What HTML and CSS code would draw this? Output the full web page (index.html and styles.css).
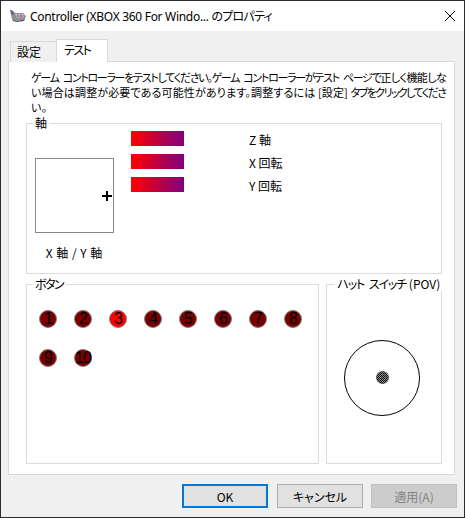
FILE: index.html
```html
<!DOCTYPE html>
<html lang="ja">
<head>
    <meta charset="UTF-8">
    <meta name="viewport" content="width=device-width, initial-scale=1.0">
    <title>Controller のプロパティ</title>
    <link rel="stylesheet" href="styles.css">
</head>
<body>
    <div class="window">
        <div class="titlebar">
            <svg class="app-icon" width="18" height="14" viewBox="0 0 18 14">
                <path d="M1 1 L4 2 L6 4 L14 4 L17 7 L16 10 L8 12 L3 10 L2 6 Z" fill="#8f8f9a"/>
                <path d="M1 1 L4 2 L5 5 L3 6 Z" fill="#6d5a78"/>
                <path d="M6 5 L14 5 L15 8 L8 9 Z" fill="#c3aedb"/>
                <rect x="8" y="6" width="2" height="2" fill="#3fae5a"/>
                <rect x="11" y="6" width="2" height="2" fill="#d64a6a"/>
                <path d="M3 10 L8 12 L16 10 L15 12 L8 13 L4 12 Z" fill="#55555c"/>
            </svg>
            <span class="title">Controller (XBOX 360 For Windo... <span class="narrow">のプロパティ</span></span>
            <svg class="close" width="10" height="10" viewBox="0 0 10 10">
                <path d="M0 0 L10 10 M10 0 L0 10" stroke="#000" stroke-width="1" fill="none"/>
            </svg>
        </div>
        <div class="content">
            <div class="tabs">
                <div class="tab">設定</div>
                <div class="tab active"><span class="narrow">テスト</span></div>
            </div>
            <div class="panel">
                <p class="intro"><span class="narrow">ゲーム コントローラーをテストしてください。ゲーム コントローラーがテスト ページで</span><span class="tight">正しく機能しな</span><br>い場合は調整が必要である可能性があります。調整するには [設定] <span class="narrow tab-hint">タブをクリックしてくださ</span><br>い。</p>

                <fieldset class="group axes">
                    <legend>軸</legend>
                    <div class="xy">
                        <div class="xy-box"><span class="cross"></span></div>
                        <div class="xy-label">X 軸 / Y 軸</div>
                    </div>
                    <div class="bars">
                        <div class="bar"></div>
                        <div class="bar"></div>
                        <div class="bar"></div>
                    </div>
                    <div class="bar-labels">
                        <div>Z 軸</div>
                        <div>X 回転</div>
                        <div>Y 回転</div>
                    </div>
                </fieldset>

                <div class="lower">
                    <fieldset class="group buttons">
                        <legend><span class="narrow">ボタン</span></legend>
                        <div class="btn-grid">
                            <div class="led">1</div>
                            <div class="led">2</div>
                            <div class="led on">3</div>
                            <div class="led">4</div>
                            <div class="led">5</div>
                            <div class="led">6</div>
                            <div class="led">7</div>
                            <div class="led">8</div>
                            <div class="led">9</div>
                            <div class="led">10</div>
                        </div>
                    </fieldset>
                    <fieldset class="group pov">
                        <legend><span class="narrow">ハット スイッチ</span> (POV)</legend>
                        <div class="pov-ring"><span class="pov-dot"></span></div>
                    </fieldset>
                </div>
            </div>
            <div class="actions">
                <button class="default">OK</button>
                <button>キャンセル</button>
                <button class="disabled">適用(A)</button>
            </div>
        </div>
    </div>
</body>
</html>
```

FILE: styles.css
```css
* {
    box-sizing: border-box;
}
html, body {
    margin: 0;
    height: 100%;
}
body {
    font-family: "Noto Sans CJK JP", "Noto Sans", sans-serif;
    font-size: 12px;
    font-feature-settings: "palt";
    color: #000;
    overflow: hidden;
}
/* kana in the original UI font is much narrower than in Noto */
.narrow {
    letter-spacing: -1.6px;
    word-spacing: 3px;
}
.window {
    width: 465px;
    height: 518px;
    border: 1px solid #2b2b2b;
    display: flex;
    flex-direction: column;
    background-color: #f0f0f0;
}
.titlebar {
    height: 30px;
    flex: none;
    background-color: #fff;
    display: flex;
    align-items: center;
    padding: 0 9px 0 8px;
}
.app-icon {
    margin-right: 3px;
}
.title {
    flex: 1;
    font-family: "Noto Sans", "Noto Sans CJK JP", sans-serif;
    font-size: 12px;
    letter-spacing: -0.3px;
}
.title .narrow {
    letter-spacing: -0.8px;
}
.content {
    flex: 1;
    padding: 8px 7px 0;
    display: flex;
    flex-direction: column;
}
.tabs {
    display: flex;
    height: 23px;
    padding-left: 2px;
    align-items: flex-end;
    position: relative;
    z-index: 1;
    margin-bottom: -1px;
}
.tab {
    width: 47px;
    height: 21px;
    border: 1px solid #d9d9d9;
    border-bottom: none;
    background-color: #f0f0f0;
    padding-left: 6px;
    line-height: 20px;
}
.tab.active {
    width: 52px;
    height: 23px;
    margin-left: -1px;
    background-color: #fff;
    padding-left: 7px;
    line-height: 19px;
}
.panel {
    width: 447px;
    height: 414px;
    background-color: #fff;
    border: 1px solid #d9d9d9;
    padding: 8px 12px 0 17px;
}
.intro {
    margin: 0 0 1px 5px;
    width: 418px;
    font-size: 11px;
    line-height: 15px;
    height: 45px;
    letter-spacing: 0.15px;
    white-space: nowrap;
}
.intro .narrow {
    letter-spacing: -1.3px;
}
.intro .tab-hint {
    letter-spacing: -1.6px;
}
.intro .tight {
    letter-spacing: -0.6px;
}
.group {
    margin: 0;
    padding: 0;
    min-width: 0;
    border: 1px solid #dcdcdc;
    position: relative;
}
.group legend {
    padding: 0 3px;
    margin-left: 5px;
    line-height: 14px;
    white-space: nowrap;
}
.axes {
    width: 416px;
    height: 158px;
    display: flex;
}
.xy {
    margin: 28px 0 0 8px;
    width: 78px;
}
.xy-box {
    width: 79px;
    height: 75px;
    border: 1px solid #87878c;
    position: relative;
}
.cross {
    position: absolute;
    left: 66px;
    top: 32px;
    width: 10px;
    height: 10px;
    background:
        linear-gradient(#000, #000) center / 10px 2px no-repeat,
        linear-gradient(#000, #000) center / 2px 10px no-repeat;
}
.xy-label {
    text-align: center;
    margin-top: 11px;
    line-height: 17px;
    word-spacing: 1px;
}
.bars {
    margin: 1px 0 0 18px;
    width: 53px;
    display: flex;
    flex-direction: column;
    gap: 8px;
}
.bar {
    height: 15px;
    background: linear-gradient(to right, #ff0000, #800080);
}
.bar-labels {
    margin: 1px 0 0 65px;
    line-height: 17px;
    display: flex;
    flex-direction: column;
    gap: 6px;
}
.lower {
    display: flex;
    margin-top: 3px;
    gap: 7px;
}
.buttons {
    width: 294px;
    height: 187px;
}
.btn-grid {
    display: grid;
    grid-template-columns: repeat(8, 18px);
    column-gap: 17px;
    row-gap: 21px;
    padding: 19px 0 0 12px;
}
.led {
    width: 18px;
    height: 18px;
    border-radius: 50%;
    background-color: #7a0000;
    border: 1px solid #808080;
    font-family: "Liberation Sans", sans-serif;
    font-size: 16px;
    line-height: 16px;
    text-align: center;
    letter-spacing: -1px;
    color: #000;
}
.led.on {
    background-color: #ff0000;
}
.pov {
    width: 116px;
    height: 187px;
}
.pov legend {
    margin-left: 7px;
}
.pov .narrow {
    letter-spacing: -1.1px;
}
.pov-ring {
    width: 76px;
    height: 76px;
    margin: 49px 0 0 17px;
    border: 1px solid #000;
    border-radius: 50%;
    position: relative;
}
.pov-dot {
    position: absolute;
    left: 31px;
    top: 30px;
    width: 13px;
    height: 13px;
    border-radius: 50%;
    background: repeating-conic-gradient(#111 0 25%, #8a8a8a 0 50%) 0 0 / 2px 2px;
}
.actions {
    display: flex;
    justify-content: flex-end;
    gap: 8px;
    margin-top: 9px;
}
.actions button {
    width: 86px;
    height: 24px;
    font-family: inherit;
    font-size: 12px;
    font-feature-settings: inherit;
    padding: 0;
    background-color: #e1e1e1;
    border: 1px solid #adadad;
    color: #000;
}
.actions .default {
    border: 2px solid #0078d7;
    margin-right: 1px;
}
.actions .disabled {
    background-color: #cccccc;
    border-color: #bfbfbf;
    color: #838383;
}
```
